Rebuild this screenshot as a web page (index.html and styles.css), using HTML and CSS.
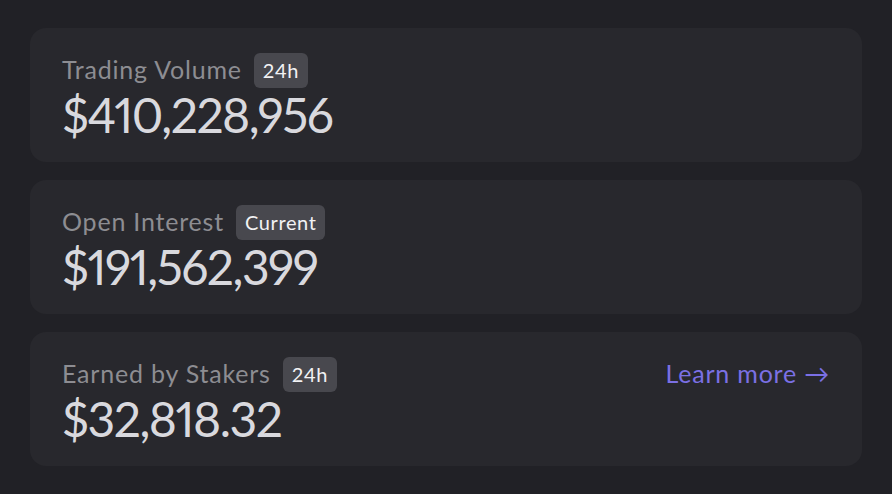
FILE: index.html
```html
<!DOCTYPE html>
<html>
<head>
<meta charset="utf-8">
<link rel="stylesheet" href="styles.css">
</head>
<body>
<div class="stats">
  <div class="card">
    <div class="head">
      <span class="label">Trading Volume</span>
      <span class="badge">24h</span>
    </div>
    <div class="value">$410,228,956</div>
  </div>
  <div class="card">
    <div class="head">
      <span class="label">Open Interest</span>
      <span class="badge">Current</span>
    </div>
    <div class="value">$191,562,399</div>
  </div>
  <div class="card">
    <div class="head">
      <span class="label">Earned by Stakers</span>
      <span class="badge">24h</span>
      <a class="learn" href="#">Learn more →</a>
    </div>
    <div class="value">$32,818.32</div>
  </div>
</div>
</body>
</html>
```

FILE: styles.css
```css
html, body {
  margin: 0;
  padding: 0;
  background: #212126;
  font-family: Lato, "Noto Sans", sans-serif;
}
.stats {
  display: flex;
  flex-direction: column;
  gap: 18px;
  padding: 28px 30px;
}
.card {
  background: #28282d;
  border-radius: 16px;
  height: 134px;
  box-sizing: border-box;
  padding: 25px 32px 0 32px;
}
.head {
  display: flex;
  align-items: center;
  height: 35px;
  gap: 12px;
}
.label {
  font-size: 25px;
  letter-spacing: 0.8px;
  color: #8d8d92;
  margin-bottom: 4px;
}
.badge {
  background: #48484e;
  color: #f2f2f4;
  font-size: 20px;
  border-radius: 6px;
  height: 35px;
  line-height: 35px;
  padding: 0 9px;
  letter-spacing: 0.6px;
}
.learn {
  margin-left: auto;
  color: #7b70e4;
  text-decoration: none;
  font-size: 25px;
  letter-spacing: 0.8px;
  margin-bottom: 4px;
}
.value {
  font-size: 48px;
  font-variant-numeric: proportional-nums;
  letter-spacing: -1.5px;
  color: #d9d9de;
  line-height: 56px;
  margin-top: -1px;
}
```
